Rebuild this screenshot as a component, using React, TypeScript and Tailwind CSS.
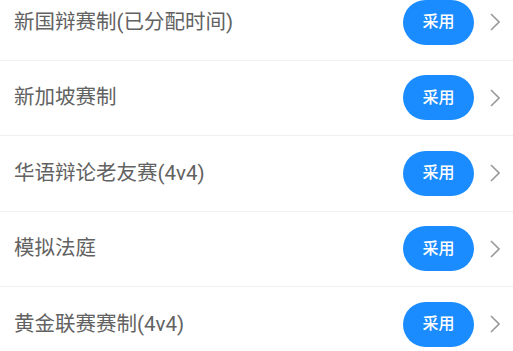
import React from "react";

const items = [
  "新国辩赛制(已分配时间)",
  "新加坡赛制",
  "华语辩论老友赛(4v4)",
  "模拟法庭",
  "黄金联赛赛制(4v4)",
];

export default function App() {
  return (
    <div
      className="w-[513px] h-[351px] overflow-hidden bg-white"
      style={{ fontFamily: 'Roboto, "Noto Sans CJK SC", sans-serif' }}
    >
      <div className="-mt-[15px] flex flex-col">
        {items.map((t, i) => (
          <div
            key={i}
            className="flex h-[75.5px] shrink-0 items-center border-b border-[#f0f0f0] pl-[14px] pr-[13px]"
          >
            <span className="flex-1 text-[20.5px] text-[#626262]">{t}</span>
            <button className="flex h-[45px] w-[71px] items-center justify-center rounded-full bg-[#1a8cff] text-[16px] font-medium text-white">
              采用
            </button>
            <svg
              className="ml-[16px]"
              width="10"
              height="18"
              viewBox="0 0 10 18"
              fill="none"
            >
              <path
                d="M1 1 L9 9 L1 17"
                stroke="#9a9a9a"
                strokeWidth="1.6"
              />
            </svg>
          </div>
        ))}
      </div>
    </div>
  );
}
